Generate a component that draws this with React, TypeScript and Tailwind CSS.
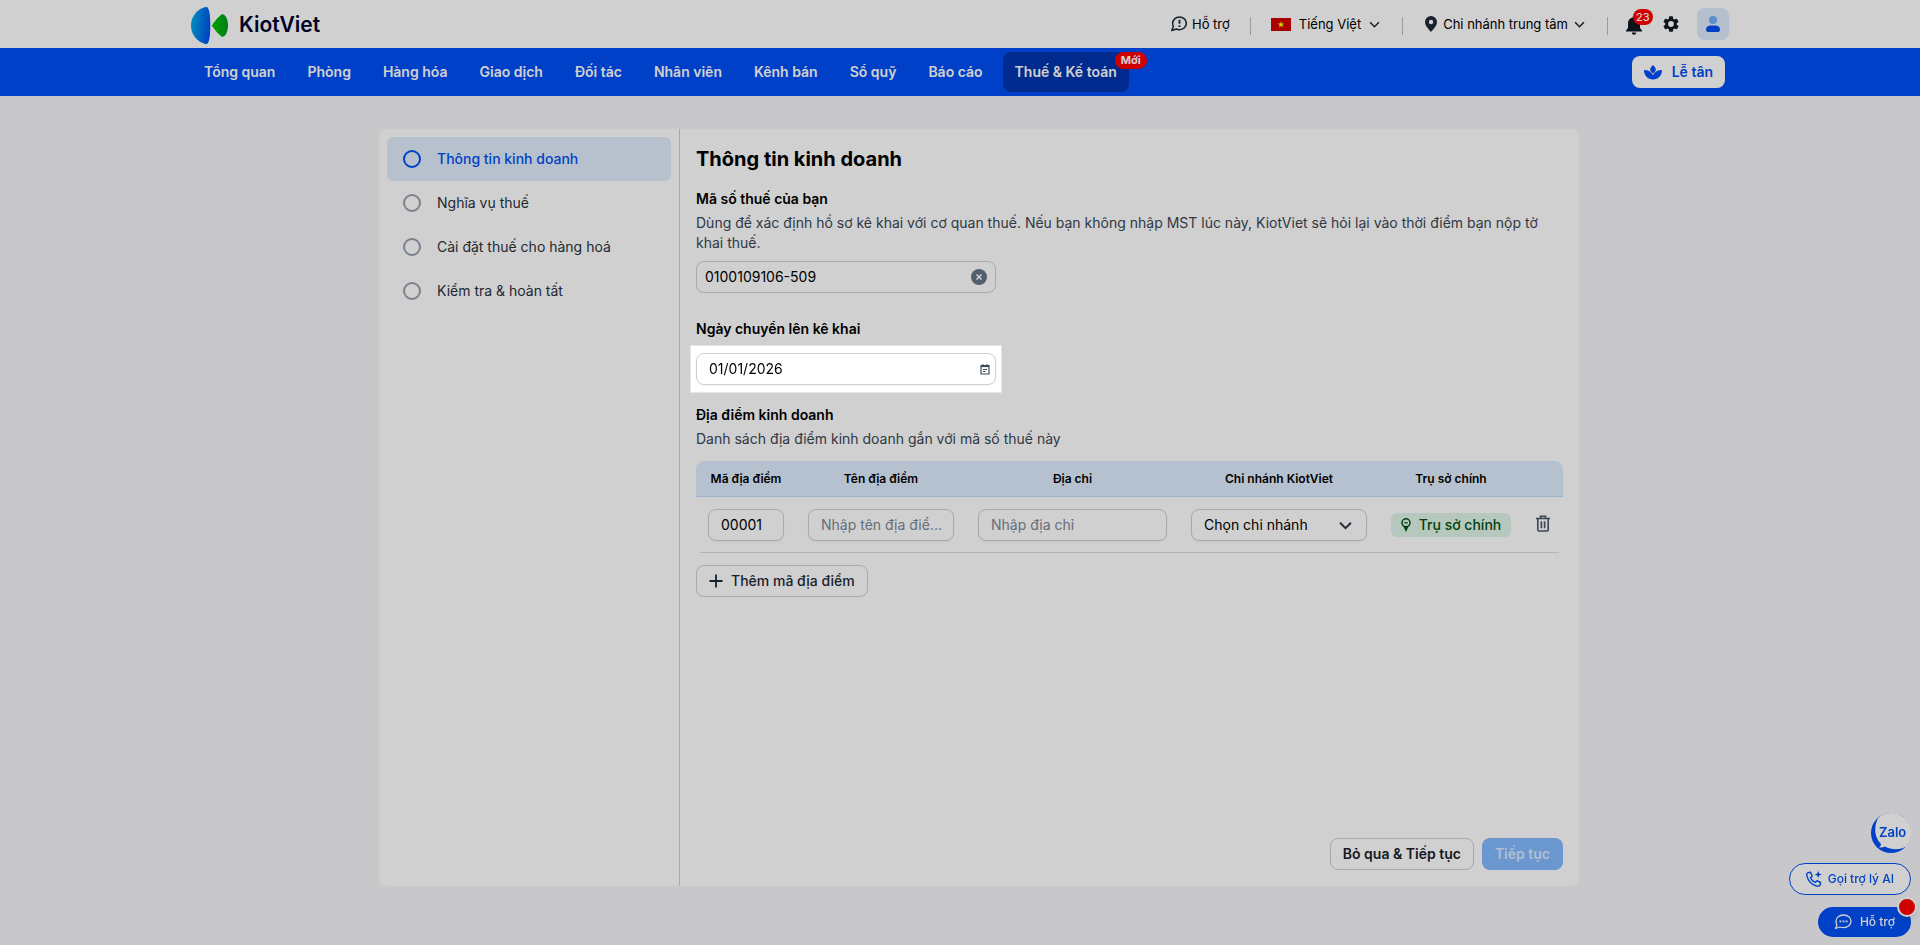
import { useState } from 'react';
import type { ReactNode } from 'react';

const NAV_ITEMS = [
  'Tổng quan',
  'Phòng',
  'Hàng hóa',
  'Giao dịch',
  'Đối tác',
  'Nhân viên',
  'Kênh bán',
  'Sổ quỹ',
  'Báo cáo',
];

const STEPS = ['Thông tin kinh doanh', 'Nghĩa vụ thuế', 'Cài đặt thuế cho hàng hoá', 'Kiểm tra & hoàn tất'];

function Chevron({ className }: { className: string }) {
  return (
    <svg viewBox="0 0 12 8" className={className} fill="none" stroke="currentColor" strokeWidth="1.8" aria-hidden="true">
      <path d="M1 1.5l5 5 5-5" />
    </svg>
  );
}

function Logo() {
  return (
    <a href="#" className="flex items-center gap-[11px] pt-0.5">
      <svg viewBox="0 0 37 37" className="size-[37px]" aria-hidden="true">
        <defs>
          <linearGradient id="kvBlue" x1="0" x2="1" y1="0.4" y2="0.6">
            <stop offset="0" stopColor="#00aee8" />
            <stop offset="1" stopColor="#0050f0" />
          </linearGradient>
          <linearGradient id="kvGreen" x1="0" x2="1">
            <stop offset="0" stopColor="#00c800" />
            <stop offset="1" stopColor="#009a20" />
          </linearGradient>
        </defs>
        <path d="M15.500 0C18 0 19.300 8 19.300 18.500S18 37 15.500 37C11 37 0 31 0 18.500S11 0 15.500 0z" fill="url(#kvBlue)" />
        <path
          d="M20.700 18.500C23 15.200 28 9 30.500 7.500 34 6.200 37 12 37 18.500s-3 12.300-6.500 11C28 28 23 21.800 20.700 18.500z"
          fill="url(#kvGreen)"
        />
      </svg>
      <span className="text-[21px] leading-7 font-semibold text-[#00002e]">KiotViet</span>
    </a>
  );
}

function Separator() {
  return <span className="mt-1 h-[18px] w-px bg-[#b9bec7]" />;
}

function TopBar() {
  return (
    <header className="bg-white">
      <div className="mx-auto flex h-12 w-full max-w-[1538px] items-center justify-between">
        <Logo />
        <div className="flex items-center text-[13px] text-black">
          <a href="#" className="mr-5 flex items-center gap-[5px]">
            <svg viewBox="1 1 16 16" className="size-4 text-[#1f2a37]" fill="none" stroke="currentColor" aria-hidden="true">
              <path
                d="M9.500 2c3.900 0 6.800 2.800 6.800 6.300s-2.900 6.400-6.800 6.400c-1.200 0-2.300-.2-3.200-.7L1.800 15.500 3.300 11.500c-.4-1-.6-2-.6-3.200C2.700 4.800 5.600 2 9.500 2z"
                strokeWidth="1.500"
                strokeLinejoin="round"
              />
              <path d="M9.500 4.800v4M9.500 10.200V12" strokeWidth="1.800" />
            </svg>
            Hỗ trợ
          </a>
          <Separator />
          <button type="button" className="mr-[22px] ml-5 flex items-center gap-2">
            <svg viewBox="0 0 20 13" className="h-[13px] w-5" aria-hidden="true">
              <rect width="20" height="13" fill="#d00000" />
              <path d="M10 3l.8 2.500h2.600l-2.100 1.500.8 2.500L10 8 7.900 9.500l.8-2.500-2.100-1.500h2.600z" fill="#ff0" />
            </svg>
            Tiếng Việt
            <Chevron className="h-[7px] w-[11px] text-[#1f2a37]" />
          </button>
          <Separator />
          <button type="button" className="mx-[22px] flex items-center gap-[6px]">
            <svg viewBox="0 0 12 16" className="h-4 w-3 text-[#1f2a37]" fill="currentColor" aria-hidden="true">
              <path
                fillRule="evenodd"
                d="M6 0a6 6 0 0 1 6 6c0 4-4 7.500-6 10C4 13.500 0 10 0 6a6 6 0 0 1 6-6zm0 3.800a2.200 2.200 0 1 0 0 4.400 2.200 2.200 0 0 0 0-4.400z"
              />
            </svg>
            Chi nhánh trung tâm
            <Chevron className="h-[7px] w-[11px] text-[#1f2a37]" />
          </button>
          <Separator />
          <button type="button" aria-label="Thông báo" className="relative ml-[17px] pt-0.5">
            <svg viewBox="0 0 18 20" className="h-5 w-[18px] text-[#111820]" fill="currentColor" aria-hidden="true">
              <path d="M9 1a1.300 1.300 0 0 1 1.300 1.400A6 6 0 0 1 15 8.200V13l2 2.500v1H1v-1L3 13V8.200a6 6 0 0 1 4.700-5.800A1.300 1.300 0 0 1 9 1zM6.800 17.500h4.400a2.200 2.200 0 0 1-4.400 0z" />
            </svg>
            <span className="absolute -top-1 left-2 rounded-full bg-[#ff0000] px-[3px] text-[11px] leading-4 font-medium text-white">
              23
            </span>
          </button>
          <button type="button" aria-label="Cài đặt" className="mr-[18px] ml-5">
            <svg viewBox="2 2 20 20" className="size-4 text-[#111820]" fill="currentColor" aria-hidden="true">
              <path d="M19.140 12.940c.04-.3.060-.61.060-.94s-.02-.64-.07-.94l2.030-1.580a.49.490 0 0 0 .12-.61l-1.920-3.320a.49.490 0 0 0-.59-.22l-2.390.96a7 7 0 0 0-1.620-.94l-.36-2.540a.48.480 0 0 0-.48-.41h-3.840a.47.470 0 0 0-.47.410l-.36 2.540c-.59.240-1.130.57-1.620.94l-2.390-.96a.48.480 0 0 0-.59.220L2.740 8.870a.47.470 0 0 0 .12.610l2.030 1.580a6.300 6.300 0 0 0 0 1.880l-2.030 1.580a.49.490 0 0 0-.12.610l1.920 3.320c.12.220.37.290.59.220l2.390-.96c.5.380 1.030.7 1.620.94l.36 2.540c.05.240.24.410.48.410h3.840c.24 0 .44-.17.470-.41l.36-2.540c.59-.24 1.130-.56 1.620-.94l2.390.96c.22.080.47 0 .59-.22l1.920-3.320a.47.470 0 0 0-.12-.61zM12 15.600a3.600 3.600 0 1 1 0-7.200 3.600 3.600 0 0 1 0 7.200z" />
            </svg>
          </button>
          <button
            type="button"
            aria-label="Tài khoản"
            className="flex size-8 items-center justify-center rounded-lg bg-[#dcebfa]"
          >
            <svg viewBox="0 0 14 16" className="h-4 w-3.5" aria-hidden="true">
              <circle cx="7" cy="4" r="4" fill="#72aefa" />
              <path d="M5 9.500h4c3 0 5 1.500 5 4 0 1.500-.7 2.500-2 2.500H2c-1.300 0-2-1-2-2.500 0-2.500 2-4 5-4z" fill="#0050f4" />
            </svg>
          </button>
        </div>
      </div>
    </header>
  );
}

function NavBar() {
  return (
    <nav className="bg-[#004ef4] text-sm font-semibold text-white">
      <div className="mx-auto flex h-12 w-full max-w-[1538px] items-center justify-between pl-px">
        <div className="flex gap-2">
          {NAV_ITEMS.map((item) => (
            <a key={item} href="#" className="flex h-10 items-center rounded-lg px-3 whitespace-nowrap">
              {item}
            </a>
          ))}
          <a href="#" className="relative flex h-10 items-center rounded-lg bg-[#0034ae] px-3 whitespace-nowrap">
            Thuế &amp; Kế toán
            <span className="absolute top-0 -right-[18px] rounded-full bg-[#ff0000] px-1.5 text-[11px] leading-[17px] font-bold">
              Mới
            </span>
          </a>
        </div>
        <button type="button" className="mr-1 flex h-8 items-center gap-2.5 rounded-lg bg-white px-3 text-[#004ef4]">
          <svg viewBox="0 0 18 15" className="h-[15px] w-[18px]" fill="currentColor" aria-hidden="true">
            <path d="M9 0c1.800 1.800 2.800 3.200 2.800 4.700 0 1.300-1.300 2.600-2.800 4.100-1.500-1.500-2.800-2.800-2.800-4.100C6.200 3.200 7.200 1.800 9 0z" />
            <path d="M0 5c4.300 0 7.300 1.700 9 5.200C10.700 6.700 13.700 5 18 5c0 5.500-3.800 9.500-9 9.500S0 10.500 0 5z" />
          </svg>
          Lễ tân
        </button>
      </div>
    </nav>
  );
}

function StepList() {
  return (
    <aside className="w-[301px] shrink-0 border-r border-[#cdd0d5] p-2">
      {STEPS.map((step, i) => (
        <button
          key={step}
          type="button"
          className={`flex h-11 w-full items-center gap-4 rounded-md px-4 text-left ${
            i === 0 ? 'bg-[#dfedfc] font-medium text-[#0050f4]' : 'text-[#2b323b]'
          }`}
        >
          <span
            className={`size-[18px] rounded-full border-2 ${i === 0 ? 'border-[#0050f4]' : 'border-[#96a0ae]'}`}
          />
          {step}
        </button>
      ))}
    </aside>
  );
}

function HeadCell({ children }: { children?: ReactNode }) {
  return <th className="h-9 border-b border-[#bfdcfa] font-semibold first:rounded-tl-lg last:rounded-tr-lg">{children}</th>;
}

const FIELD = 'h-8 w-full rounded-lg border border-[#cdd0d6] bg-white text-sm text-black outline-none';

function LocationTable() {
  return (
    <>
      <table className="mt-3 w-full table-fixed border-separate border-spacing-0">
        <colgroup>
          <col className="w-[100px]" />
          <col className="w-[170px]" />
          <col />
          <col className="w-[200px]" />
          <col className="w-[144px]" />
          <col className="w-[40px]" />
        </colgroup>
        <thead className="text-xs text-black">
          <tr className="*:bg-[#dfedfe]">
            <HeadCell>Mã địa điểm</HeadCell>
            <HeadCell>Tên địa điểm</HeadCell>
            <HeadCell>Địa chỉ</HeadCell>
            <HeadCell>Chi nhánh KiotViet</HeadCell>
            <HeadCell>Trụ sở chính</HeadCell>
            <HeadCell />
          </tr>
        </thead>
        <tbody>
          <tr className="*:pt-3 *:pb-[11px]">
            <td className="px-3">
              <input aria-label="Mã địa điểm" defaultValue="00001" className={`${FIELD} px-3 pb-0.5 shadow-xs`} />
            </td>
            <td className="px-3">
              <input
                aria-label="Tên địa điểm"
                placeholder="Nhập tên địa điể..."
                className={`${FIELD} pr-1.5 pb-0.5 pl-3 shadow-xs placeholder:text-[#7c8796]`}
              />
            </td>
            <td className="px-3">
              <input
                aria-label="Địa chỉ"
                placeholder="Nhập địa chỉ"
                className={`${FIELD} px-3 pb-0.5 shadow-xs placeholder:text-[#7c8796]`}
              />
            </td>
            <td className="px-3">
              <div className="relative">
                <select aria-label="Chi nhánh KiotViet" className={`${FIELD} appearance-none px-3 shadow-xs`}>
                  <option>Chọn chi nhánh</option>
                </select>
                <Chevron className="pointer-events-none absolute top-3 right-[15px] h-[9px] w-[13px] text-[#2b3645]" />
              </div>
            </td>
            <td className="px-3">
              <span className="flex h-6 items-center justify-center gap-2 rounded-md bg-[#dff6e8] text-sm font-medium whitespace-nowrap text-[#00500e]">
                <svg viewBox="0 0 10 14" className="h-3.5 w-2.5" fill="none" stroke="currentColor" strokeWidth="1.500" aria-hidden="true">
                  <circle cx="5" cy="4.800" r="4" />
                  <path d="M3.200 4.800h3.600" strokeWidth="1.200" />
                  <path d="M2.500 8.500L5 14l2.500-5.500z" fill="currentColor" stroke="none" />
                </svg>
                Trụ sở chính
              </span>
            </td>
            <td>
              <button type="button" aria-label="Xóa địa điểm" className="mx-auto mb-1 block text-[#4a5566]">
                <svg viewBox="0 0 14 17" className="h-[17px] w-3.5" fill="none" stroke="currentColor" strokeWidth="1.600" aria-hidden="true">
                  <path d="M0 3.500h14M4.500 3.300V1.200h5v2.100M1.800 4v10.700c0 .8.500 1.300 1.300 1.300h7.800c.8 0 1.300-.5 1.300-1.300V4M5.400 6.300v7M8.600 6.300v7" />
                </svg>
              </button>
            </td>
          </tr>
        </tbody>
      </table>
      <hr className="mx-1 border-[#dcdde0]" />
    </>
  );
}

function BusinessForm() {
  const [taxCode, setTaxCode] = useState('0100109106-509');

  return (
    <main className="flex min-w-0 flex-1 flex-col p-4">
      <h1 className="text-xl leading-7 font-bold text-black">Thông tin kinh doanh</h1>

      <label htmlFor="taxCode" className="mt-4 font-semibold text-black">
        Mã số thuế của bạn
      </label>
      <p className="mt-1 text-[#3c4654]">
        Dùng để xác định hồ sơ kê khai với cơ quan thuế. Nếu bạn không nhập MST lúc này, KiotViet sẽ hỏi lại vào thời điểm
        bạn nộp tờ khai thuế.
      </p>
      <div className="relative mt-2 w-[300px]">
        <input
          id="taxCode"
          value={taxCode}
          onChange={(e) => setTaxCode(e.target.value)}
          className={`${FIELD} pr-8 pb-0.5 pl-2`}
        />
        <button
          type="button"
          aria-label="Xóa mã số thuế"
          onClick={() => setTaxCode('')}
          className="absolute top-2 right-[9px] flex size-4 items-center justify-center rounded-full bg-[#667488] text-white"
        >
          <svg viewBox="0 0 6 6" className="size-1.5" stroke="currentColor" strokeWidth="1.500" aria-hidden="true">
            <path d="M.5.5l5 5M5.500.5l-5 5" />
          </svg>
        </button>
      </div>

      <label htmlFor="startDate" className="mt-[26px] font-semibold text-black">
        Ngày chuyển lên kê khai
      </label>
      <div className="relative z-50 mt-3.5 w-[300px]">
        {/* spotlight: the large shadow dims everything around the date field */}
        <div className="pointer-events-none absolute -inset-x-1.5 -inset-y-2 border border-black/10 shadow-[0_0_0_3000px_rgba(0,0,0,0.184)]" />
        <input id="startDate" defaultValue="01/01/2026" className={`${FIELD} relative pr-8 pb-0.5 pl-3 shadow-xs`} />
        <svg viewBox="0 0 10 11" className="absolute top-[11px] right-[6px] h-[11px] w-2.5 text-[#3f4a59]" fill="none" stroke="currentColor" aria-hidden="true">
          <path d="M1 1.500h8v8.500H1z" strokeWidth="1.200" />
          <path d="M1 2.200h8" strokeWidth="1.800" />
          <path d="M3 0v2M7 0v2M3 5.500h4M3 7.500h2.500" />
        </svg>
      </div>

      <h2 className="mt-5 font-semibold text-black">Địa điểm kinh doanh</h2>
      <p className="mt-1 text-[#3c4654]">Danh sách địa điểm kinh doanh gắn với mã số thuế này</p>
      <LocationTable />
      <button
        type="button"
        className="mt-3 flex h-8 items-center gap-2 self-start rounded-lg border border-[#cdd0d6] px-3 font-medium text-[#1f2a37]"
      >
        <svg viewBox="0 0 14 14" className="size-3.5" stroke="currentColor" strokeWidth="1.800" aria-hidden="true">
          <path d="M7 .5v13M.5 7h13" />
        </svg>
        Thêm mã địa điểm
      </button>

      <div className="mt-auto flex justify-end gap-2 font-semibold">
        <button type="button" className="h-8 rounded-lg border border-[#cdd0d6] px-3 text-[#1a222c]">
          Bỏ qua &amp; Tiếp tục
        </button>
        <button type="button" disabled className="h-8 rounded-lg bg-[#82b9ff] px-[13px] text-[#dbeaff]">
          Tiếp tục
        </button>
      </div>
    </main>
  );
}

function FloatingActions() {
  return (
    <div className="fixed right-[9px] bottom-2 z-10 flex flex-col items-end text-xs font-medium">
      <button type="button" aria-label="Zalo" className="size-10">
        <svg viewBox="0 0 40 40" className="size-10" aria-hidden="true">
          <circle cx="20" cy="20" r="20" fill="#0050f4" />
          <path
            d="M20 0a20 20 0 0 1 15.500 33C30 37.500 20 37 14 33.500c-2 1-4 1.200-6 .8 1.500-1 2-2.200 2-3.300C2 23 3.500 11 7.500 4.400A20 20 0 0 1 20 0z"
            fill="#fff"
          />
          <path d="M20 0a20 20 0 0 1 14.100 34.100L30 30 10 6z" fill="#fff" />
          <text x="8" y="24" fontSize="13" fontWeight="600" fill="#0050f4" fontFamily="Inter, sans-serif">
            Zalo
          </text>
        </svg>
      </button>
      <button
        type="button"
        className="mt-2.5 flex h-8 items-center gap-1.5 rounded-full border border-[#0050f4] bg-white px-4 text-[#0050f4]"
      >
        <svg viewBox="0 0 16 16" className="size-4" fill="none" stroke="currentColor" strokeWidth="1.400" aria-hidden="true">
          <path
            d="M4.500 1.200L2 1.600C.8 2 .6 3.500 1 5.200c1.200 5 4.800 8.600 9.600 9.800 1.600.3 3.200.1 3.500-1.200l.5-2.300-3.600-1.800-1.800 1.700C7 10.500 5.300 8.800 4.500 6.700L6.200 5z"
            strokeLinejoin="round"
          />
          <path d="M12.200 0l.9 2.600 2.600.9-2.600.9-.9 2.600-.9-2.600-2.600-.9 2.600-.9z" fill="currentColor" stroke="none" />
        </svg>
        Gọi trợ lý AI
      </button>
      <button type="button" className="relative mt-3 flex h-[30px] items-center gap-2 rounded-full bg-[#0050f4] px-4 text-white">
        <svg viewBox="0 0 18 16" className="h-4 w-[18px]" fill="none" stroke="currentColor" strokeWidth="1.300" aria-hidden="true">
          <path d="M9.500 1C13.800 1 17 3.800 17 7.300s-3.200 6.400-7.500 6.400c-1.300 0-2.500-.3-3.500-.7L1.500 14.500 3 11C2.300 10 2 8.700 2 7.300 2 3.800 5.200 1 9.500 1z" strokeLinejoin="round" />
          <path d="M5.500 7.300h1.800M8.600 7.300h1.800M11.700 7.300h1.800" strokeWidth="1.800" />
        </svg>
        Hỗ trợ
        <span className="absolute -top-2.5 -right-1.5 size-5 rounded-full border-2 border-white bg-[#ff0000] shadow-md" />
      </button>
    </div>
  );
}

export default function App() {
  return (
    <div className="flex min-h-screen flex-col overflow-hidden bg-[#f5f6f8] font-['Inter','Liberation_Sans',sans-serif] text-sm">
      <TopBar />
      <NavBar />
      <div className="flex flex-1 justify-center pt-[33px] pb-[59px] pl-[38px]">
        <div className="flex w-full max-w-[1200px] rounded-lg bg-white">
          <StepList />
          <BusinessForm />
        </div>
      </div>
      <FloatingActions />
    </div>
  );
}
